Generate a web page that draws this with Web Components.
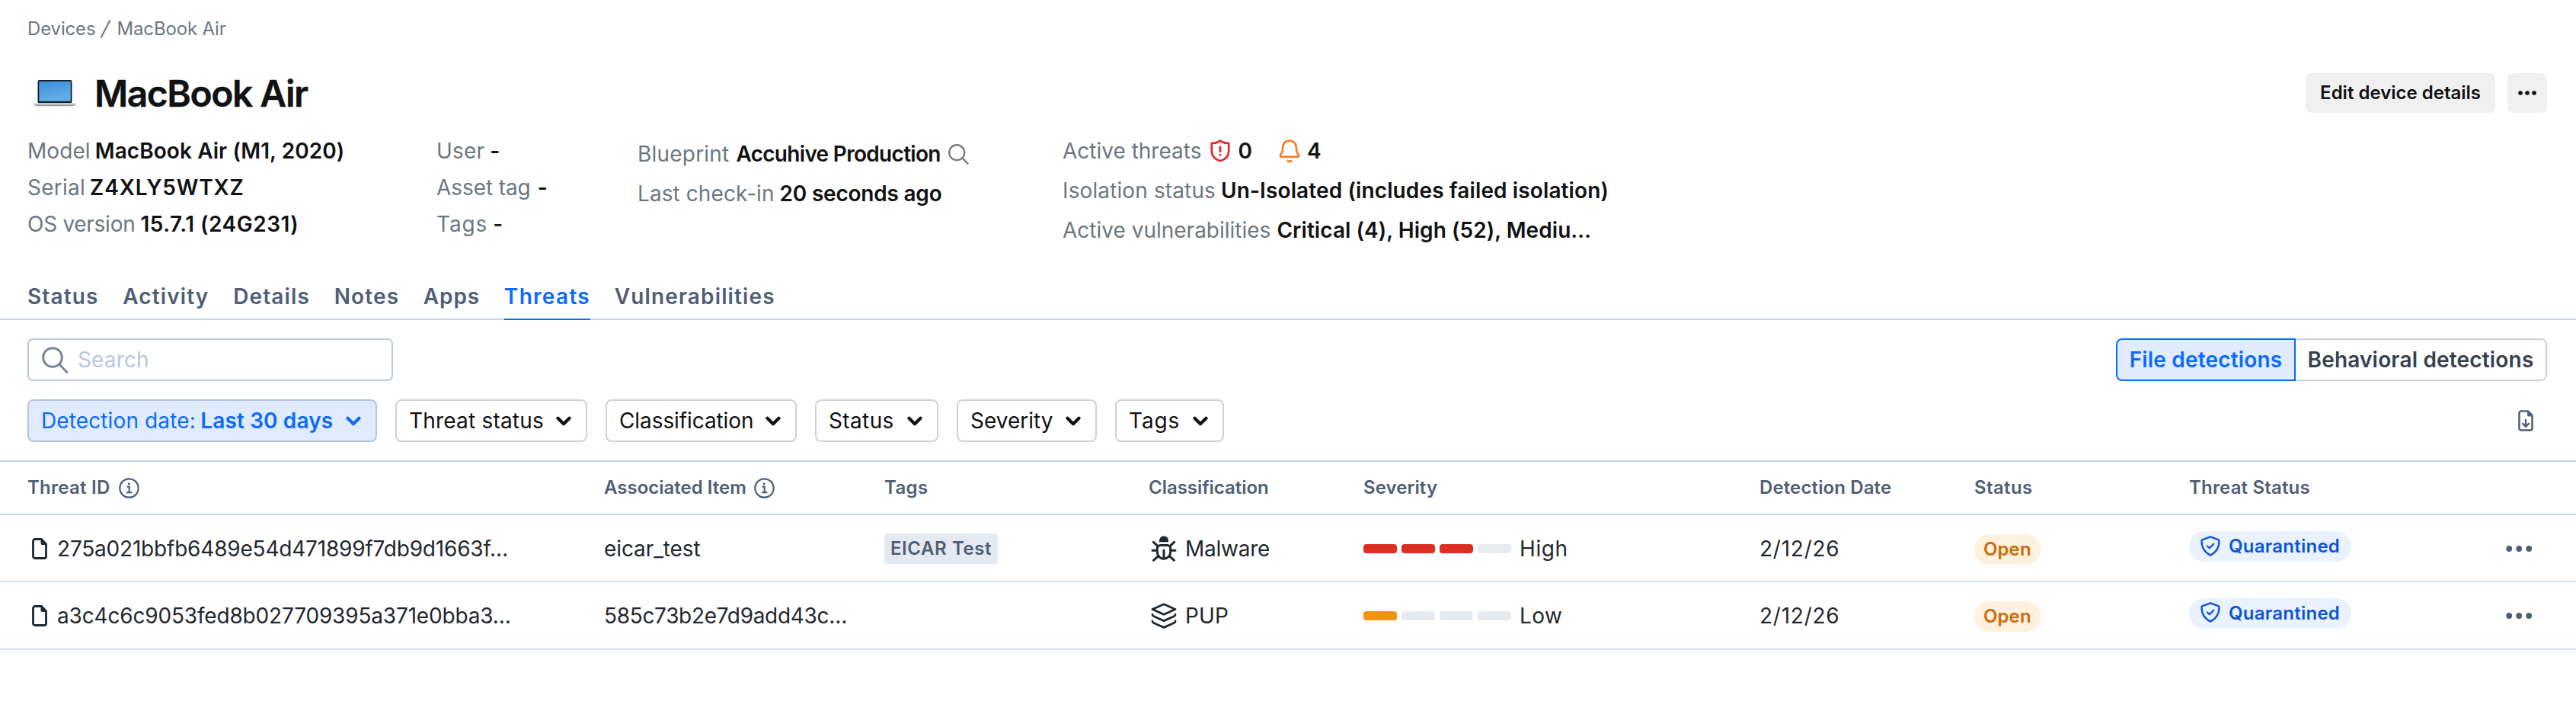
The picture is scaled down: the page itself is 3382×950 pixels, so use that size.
<!DOCTYPE html>
<html lang="en">
<head>
<meta charset="utf-8">
<title>MacBook Air – Threats</title>
<style>
  html, body { margin: 0; background: #fff; }
  body { font-family: Inter, "Liberation Sans", sans-serif; font-size: 28px; color: #111213; }
</style>
</head>
<body>
<device-page></device-page>

<script>
const define = (name, css, html) => {
  const tpl = document.createElement('template');
  tpl.innerHTML = `<style>*{box-sizing:border-box}${css}</style>${html}`;
  customElements.define(name, class extends HTMLElement {
    constructor() {
      super();
      this.attachShadow({ mode: 'open' }).append(tpl.content.cloneNode(true));
    }
  });
};

/* name: [width, height, markup] */
const ICONS = {
  laptop: [56, 35, `<defs><linearGradient id="s" x1="0" y1="0" x2="0.3" y2="1"><stop offset="0" stop-color="#3d8fdb"/><stop offset="1" stop-color="#62aeea"/></linearGradient><linearGradient id="b" x1="0" y1="0" x2="0" y2="1"><stop offset="0" stop-color="#e2e2e2"/><stop offset="1" stop-color="#8b8b8b"/></linearGradient></defs><rect x="5.5" y="0" width="45" height="30.5" rx="2" fill="#15202b"/><rect x="7.3" y="1.8" width="41.4" height="26" fill="url(#s)"/><path d="M0 30.2h56v1.6c-1 1.5-3 2.4-6 2.4H6c-3 0-5-.9-6-2.4z" fill="url(#b)"/>`],
  search: [27, 27, `<g fill="none" stroke="currentColor" stroke-width="2.2"><circle cx="11.200" cy="11.200" r="10"/><path d="M18.400 18.400l7.800 7.800"/></g>`],
  lens: [34, 35, `<g fill="none" stroke="currentColor" stroke-width="3"><circle cx="14" cy="14" r="12.300"/><path d="M22.700 22.700l10 10.600" stroke-linecap="round"/></g>`],
  alert: [26, 30, `<g fill="none" stroke="currentColor" stroke-width="2.700" stroke-linecap="round" stroke-linejoin="round"><path d="M13 1.600C10 4 6 4.900 1.800 5v10.500C1.800 21.600 6 26 13 28.300c7-2.300 11.200-6.700 11.200-12.800V5C20 4.900 16 4 13 1.600z"/><path d="M13 10v5.500M13 20.300v.1" stroke-width="2.900"/></g>`],
  bell: [28, 31, `<g fill="none" stroke="currentColor" stroke-width="2.600" stroke-linecap="round" stroke-linejoin="round"><path d="M14 1.500c5.200 0 8.600 3.800 8.900 8.800l.2 4.200c.1 1.900 1 3.400 2.600 5.300.9 1.100.3 3-1.300 3H3.600c-1.600 0-2.200-1.900-1.300-3 1.600-1.900 2.500-3.400 2.600-5.300l.2-4.200c.3-5 3.700-8.800 8.900-8.800z"/><path d="M11.700 28c1 1.300 3.600 1.300 4.600 0"/></g>`],
  chevron: [20, 13, `<path d="M2.500 2.800l7.500 7.500 7.500-7.500" fill="none" stroke="currentColor" stroke-width="4.200" stroke-linecap="round" stroke-linejoin="round"/>`],
  info: [27, 27, `<g fill="none" stroke="currentColor" stroke-width="2.200"><circle cx="13.500" cy="13.500" r="12.200"/><path d="M10.700 11.700h3v7.300M10 19.200h7.400"/></g><circle cx="13.300" cy="7.800" r="1.500" fill="currentColor"/>`],
  file: [20, 28, `<path d="M4 1.500h8.500l6 6.500V24a2.500 2.500 0 0 1-2.500 2.500H4A2.500 2.500 0 0 1 1.500 24V4A2.500 2.500 0 0 1 4 1.500z" fill="none" stroke="currentColor" stroke-width="2.800" stroke-linejoin="round"/><path d="M11.500 1.500l7 7.500h-5a2 2 0 0 1-2-2z" fill="currentColor"/>`],
  download: [20, 28, `<path d="M4 1.500h9l5.500 5.500V24a2.500 2.500 0 0 1-2.500 2.500H4A2.500 2.500 0 0 1 1.500 24V4A2.500 2.500 0 0 1 4 1.500z" fill="none" stroke="currentColor" stroke-width="2.500" stroke-linejoin="round"/><path d="M12 1.500l6.500 7H14a2 2 0 0 1-2-2z" fill="currentColor"/><path d="M10 13v8.500M6 17.800l4 4 4-4" fill="none" stroke="currentColor" stroke-width="2.400" stroke-linecap="round" stroke-linejoin="round"/>`],
  bug: [34, 34, `<path d="M11 8.300C10.700 3.500 13 .5 17 .5s6.300 3 6 7.800z" fill="currentColor"/><g fill="none" stroke="currentColor" stroke-width="3" stroke-linecap="round"><path d="M12.500 12.400h9c2.500 0 4.200 1.800 4.200 4.300v4.500c0 5-3.700 9-8.700 9s-8.700-4-8.700-9v-4.500c0-2.500 1.700-4.300 4.200-4.300zM17 19v10.500M3.400 8.300l5.400 5M30.600 8.300l-5.400 5M2 19.200h5.500M26.500 19.200H32M3.600 32.200l5.800-5.400M30.400 32.200l-5.800-5.400"/></g>`],
  layers: [34, 34, `<g fill="none" stroke="currentColor" stroke-width="2.800" stroke-linecap="round" stroke-linejoin="round"><path d="M17 1.800L32 8.500l-15 6.800L2 8.500z"/><path d="M2 15.200c0 1.300.3 1.800 1.400 2.300L17 23.600l13.600-6.100c1.100-.5 1.400-1 1.400-2.300M2 24c0 1.300.3 1.800 1.400 2.300L17 32.400l13.600-6.100c1.100-.5 1.400-1 1.400-2.300"/></g>`],
  check: [26, 27, `<g fill="none" stroke="currentColor" stroke-width="2.300" stroke-linecap="round" stroke-linejoin="round"><path d="M13 1.400l10.300 3.700c.8.300 1.200.8 1.200 1.700C24.500 15.500 20.500 22 13 25.600 5.500 22 1.500 15.500 1.500 6.800c0-.9.400-1.400 1.200-1.700z"/><path d="M9 13.600l2.900 2.600 5.300-5.500"/></g>`],
  more: [35, 8, `<g fill="currentColor"><circle cx="4.200" cy="4" r="3.900"/><circle cx="17.200" cy="4" r="3.900"/><circle cx="30.200" cy="4" r="3.900"/></g>`],
  dots: [24, 6, `<g fill="currentColor"><circle cx="3" cy="3" r="2.800"/><circle cx="12" cy="3" r="2.800"/><circle cx="21" cy="3" r="2.800"/></g>`]
};

customElements.define('ui-icon', class extends HTMLElement {
  connectedCallback() {
    if (this.shadowRoot) return;
    const [w, h, body] = ICONS[this.getAttribute('name')];
    this.attachShadow({ mode: 'open' }).innerHTML =
      `<style>:host{display:block;flex:none;width:${w}px;height:${h}px}svg{display:block}</style>
       <svg width="${w}" height="${h}" viewBox="0 0 ${w} ${h}">${body}</svg>`;
  }
});

define('bread-crumbs', `
  :host{display:flex;align-items:center;gap:6px;height:32px;font-size:24px;line-height:32px;color:#6c7780;letter-spacing:-.15px}
  svg{display:block}`,
  `<slot name="parent"></slot>
   <svg width="16" height="26" viewBox="0 0 16 26"><path d="M1.500 24.500L13.500 1.500" stroke="#6c7780" stroke-width="2"/></svg>
   <slot></slot>`);

define('ui-button', `
  :host{display:flex;align-items:center;justify-content:center;height:52px;padding:0 19px;border-radius:8px;background:#f0f0f0;font-size:24px;font-weight:600;line-height:32px}`,
  `<slot></slot>`);

define('meta-item', `
  :host{display:flex;align-items:center;gap:7px;line-height:var(--line,48px);height:var(--line,48px);white-space:nowrap;font-weight:600}
  ::slotted([slot=label]){color:#6c7780;font-weight:400}`,
  `<slot name="label"></slot><slot></slot>`);

define('meta-column', `:host{display:block}`, `<slot></slot>`);

define('tab-item', `
  :host{display:block;height:48px;margin-bottom:-2px;border-bottom:2px solid transparent;font-weight:600;line-height:34px;letter-spacing:1.13px;color:#4f5f75}
  :host([active]){color:#0b6aff;border-color:#0b6aff}`,
  `<slot></slot>`);

define('tab-bar', `
  :host{display:flex;gap:31.700px;height:48px;padding:0 36px;border-bottom:2px solid #c5d3e5}`,
  `<slot></slot>`);

define('search-field', `
  :host{display:flex;align-items:center;width:480px;height:56px;padding:0 17px;gap:13px;border:2px solid #b9c8e0;border-radius:7px;color:#b9c6dd;letter-spacing:.13px;line-height:34px}
  ui-icon{color:#74849d}`,
  `<ui-icon name="lens"></ui-icon><slot></slot>`);

define('segment-option', `
  :host{display:flex;align-items:center;justify-content:center;height:56px;border:2px solid #cfd2d5;border-left:0;border-radius:0 8px 8px 0;color:#37414f;font-weight:600;letter-spacing:.18px;white-space:nowrap;line-height:34px}
  :host([active]){border:2px solid #0b6aff;border-radius:8px 0 0 8px;background:#e1ecff;color:#0b6aff}`,
  `<slot></slot>`);

define('filter-chip', `
  :host{display:flex;align-items:center;height:56px;padding:0 19px 0 16px;border:2px solid #cfd2d5;border-radius:8px;line-height:34px;white-space:nowrap}
  :host([active]){background:#e0ebff;border-color:#b4c4dc;color:#0b6aff}
  ui-icon{margin-left:auto}
  ::slotted(b){font-weight:600;margin-left:6.500px}`,
  `<slot></slot><ui-icon name="chevron"></ui-icon>`);

const COLS = 'grid-template-columns:757px 368px 347px 282px 520px 282px 282px 1fr';

define('table-head', `
  :host{display:grid;${COLS};align-items:center;height:72px;padding-left:36px;border-top:2px solid #c5d3e5;border-bottom:2px solid #c5d3e5;font-size:24px;font-weight:600;color:#4f5f75;line-height:32px}`,
  `<slot></slot>`);

define('table-row', `
  :host{display:grid;${COLS};align-items:center;height:88px;padding:2px 0 0 36px;border-bottom:2px solid #d5e1ee;color:#1f282f;line-height:34px}
  :host([last]){height:89px;padding-bottom:1px;border-color:#d3dcea}`,
  `<slot></slot>`);

define('table-cell', `
  :host{display:flex;align-items:center;gap:11px;min-width:0;white-space:nowrap}`,
  `<slot></slot>`);

define('tag-label', `
  :host{display:flex;align-items:center;height:40px;padding:0 8px;border-radius:4px;background:#e4e9f2;color:#4f5f75;font-size:24px;font-weight:600;letter-spacing:.58px;line-height:32px}`,
  `<slot></slot>`);

define('status-pill', `
  :host{display:flex;align-items:center;height:40px;border-radius:20px;padding:0 12px 0;font-size:24px;font-weight:600;line-height:32px;margin-top:2px;background:#fff1dd;color:#cc6b0a;letter-spacing:.1px}
  :host([kind=quarantined]){padding:0 15px 1px;gap:11px;margin:0 0 6px;background:#eaf2ff;color:#0c55d8;letter-spacing:.24px}`,
  `<slot></slot>`);

customElements.define('severity-meter', class extends HTMLElement {
  connectedCallback() {
    if (this.shadowRoot) return;
    const level = +this.getAttribute('level');
    this.attachShadow({ mode: 'open' }).innerHTML = `
      <style>
        :host{display:flex;gap:6px}
        i{width:44px;height:12px;border-radius:4px;background:#e7ebf0}
        i.on{background:var(--tone)}
      </style>` + [1, 2, 3, 4].map(n => `<i class="${n <= level ? 'on' : ''}"></i>`).join('');
  }
});

define('device-page', `
  :host{display:block;height:950px;padding-top:22px;overflow:hidden}
  .inset{padding:0 38px 0 36px}
  .title{display:flex;align-items:center;height:52px;margin-top:42px}
  h1{margin:0 auto 0 24px;padding-top:1px;font-size:48px;font-weight:600;line-height:52px;letter-spacing:-1.500px;-webkit-text-stroke:.4px}
  .title ui-icon[name=laptop]{margin-left:8px}
  .title ui-button + ui-button{margin-left:16px;width:52px;padding:0}
  .meta{display:grid;grid-template-columns:537px 264px 558px 1fr;margin-top:24px;height:200px}
  .meta meta-column:nth-child(-n+2){padding-top:2px}
  .meta meta-column:nth-child(3){--line:52px;padding-top:4px}
  .meta meta-column:nth-child(4){--line:52px}
  .red{color:#e8262d;margin-left:5px}
  .orange{color:#fb7420;margin-left:28px}
  .tools,.filters{display:flex;align-items:center;margin-top:24px;height:56px}
  .tools segment-option:nth-of-type(1){margin-left:auto;width:236px}
  .tools segment-option:nth-of-type(2){width:330px}
  .filters{gap:24px;margin-bottom:24px}
  .filters > ui-icon{margin:0 18px 0 auto;color:#4f5f75}
  .more{margin:0 57px 0 auto;color:#4f5f75}
  .fileicon{margin:0 2px 0 6px}
  .kind{margin-left:3px}`, `
  <bread-crumbs class="inset"><span slot="parent">Devices</span>MacBook Air</bread-crumbs>

  <div class="title inset">
    <ui-icon name="laptop"></ui-icon>
    <h1>MacBook Air</h1>
    <ui-button>Edit device details</ui-button>
    <ui-button><ui-icon name="dots"></ui-icon></ui-button>
  </div>

  <div class="meta inset">
    <meta-column>
      <meta-item style="letter-spacing:.08px;gap:6px"><span slot="label">Model</span><span>MacBook Air (M1, 2020)</span></meta-item>
      <meta-item style="letter-spacing:.85px;gap:6px"><span slot="label" style="letter-spacing:.25px">Serial</span><span>Z4XLY5WTXZ</span></meta-item>
      <meta-item style="letter-spacing:.52px"><span slot="label" style="letter-spacing:-.28px">OS version</span><span>15.7.1 (24G231)</span></meta-item>
    </meta-column>
    <meta-column>
      <meta-item><span slot="label" style="letter-spacing:.2px">User</span><span>-</span></meta-item>
      <meta-item style="gap:9px"><span slot="label" style="letter-spacing:-.08px">Asset tag</span><span>-</span></meta-item>
      <meta-item><span slot="label" style="letter-spacing:.9px">Tags</span><span style="font-weight:500">-</span></meta-item>
    </meta-column>
    <meta-column>
      <meta-item style="gap:9px"><span slot="label" style="letter-spacing:.2px">Blueprint</span><span style="letter-spacing:-.7px">Accuhive Production</span><ui-icon name="search" style="color:#777;margin-left:1px"></ui-icon></meta-item>
      <meta-item><span slot="label" style="letter-spacing:.08px">Last check-in</span><span style="letter-spacing:-.22px">20 seconds ago</span></meta-item>
    </meta-column>
    <meta-column>
      <meta-item><span slot="label">Active threats</span><ui-icon name="alert" class="red"></ui-icon><span style="margin-left:3px">0</span><ui-icon name="bell" class="orange"></ui-icon><span style="margin-left:2px">4</span></meta-item>
      <meta-item><span slot="label" style="letter-spacing:.12px">Isolation status</span><span style="letter-spacing:.12px">Un-Isolated (includes failed isolation)</span></meta-item>
      <meta-item style="gap:8px"><span slot="label">Active vulnerabilities</span><span style="letter-spacing:.06px">Critical (4), High (52), Mediu…</span></meta-item>
    </meta-column>
  </div>

  <tab-bar>
    <tab-item>Status</tab-item><tab-item>Activity</tab-item><tab-item>Details</tab-item><tab-item>Notes</tab-item><tab-item style="letter-spacing:.9px">Apps</tab-item><tab-item active style="letter-spacing:1.300px">Threats</tab-item><tab-item>Vulnerabilities</tab-item>
  </tab-bar>

  <div class="tools inset">
    <search-field>Search</search-field>
    <segment-option active>File detections</segment-option><segment-option>Behavioral detections</segment-option>
  </div>

  <div class="filters inset">
    <filter-chip active style="width:459px;letter-spacing:.12px">Detection date:<b>Last 30 days</b></filter-chip>
    <filter-chip style="width:252px;letter-spacing:.2px">Threat status</filter-chip>
    <filter-chip style="width:251px;letter-spacing:-.09px">Classification</filter-chip>
    <filter-chip style="width:162px;letter-spacing:.38px">Status</filter-chip>
    <filter-chip style="width:184px">Severity</filter-chip>
    <filter-chip style="width:143px;letter-spacing:.9px">Tags</filter-chip>
    <ui-icon name="download"></ui-icon>
  </div>

  <table-head>
    <table-cell style="letter-spacing:.26px">Threat ID<ui-icon name="info"></ui-icon></table-cell>
    <table-cell style="gap:10px">Associated Item<ui-icon name="info"></ui-icon></table-cell>
    <table-cell style="letter-spacing:.37px">Tags</table-cell>
    <table-cell style="letter-spacing:-.04px">Classification</table-cell>
    <table-cell style="letter-spacing:.1px">Severity</table-cell>
    <table-cell style="letter-spacing:.12px">Detection Date</table-cell>
    <table-cell style="letter-spacing:.37px">Status</table-cell>
    <table-cell style="letter-spacing:.17px">Threat Status</table-cell>
  </table-head>

  <table-row>
    <table-cell style="letter-spacing:-.2px"><ui-icon name="file" class="fileicon"></ui-icon>275a021bbfb6489e54d471899f7db9d1663f…</table-cell>
    <table-cell style="letter-spacing:-.1px">eicar_test</table-cell>
    <table-cell><tag-label>EICAR Test</tag-label></table-cell>
    <table-cell style="letter-spacing:-.25px"><ui-icon name="bug" class="kind"></ui-icon>Malware</table-cell>
    <table-cell style="letter-spacing:.6px"><severity-meter level="3" style="--tone:#dc3022"></severity-meter>High</table-cell>
    <table-cell style="letter-spacing:.75px">2/12/26</table-cell>
    <table-cell><status-pill>Open</status-pill></table-cell>
    <table-cell><status-pill kind="quarantined"><ui-icon name="check"></ui-icon>Quarantined</status-pill><ui-icon name="more" class="more"></ui-icon></table-cell>
  </table-row>

  <table-row last>
    <table-cell style="letter-spacing:-.17px"><ui-icon name="file" class="fileicon"></ui-icon>a3c4c6c9053fed8b027709395a371e0bba3…</table-cell>
    <table-cell style="letter-spacing:-.32px">585c73b2e7d9add43c…</table-cell>
    <table-cell></table-cell>
    <table-cell style="letter-spacing:.1px"><ui-icon name="layers" class="kind"></ui-icon>PUP</table-cell>
    <table-cell style="letter-spacing:.5px"><severity-meter level="1" style="--tone:#f2940f"></severity-meter>Low</table-cell>
    <table-cell style="letter-spacing:.75px">2/12/26</table-cell>
    <table-cell><status-pill>Open</status-pill></table-cell>
    <table-cell><status-pill kind="quarantined"><ui-icon name="check" style="margin-top:-2px"></ui-icon>Quarantined</status-pill><ui-icon name="more" class="more"></ui-icon></table-cell>
  </table-row>`);
</script>
</body>
</html>
